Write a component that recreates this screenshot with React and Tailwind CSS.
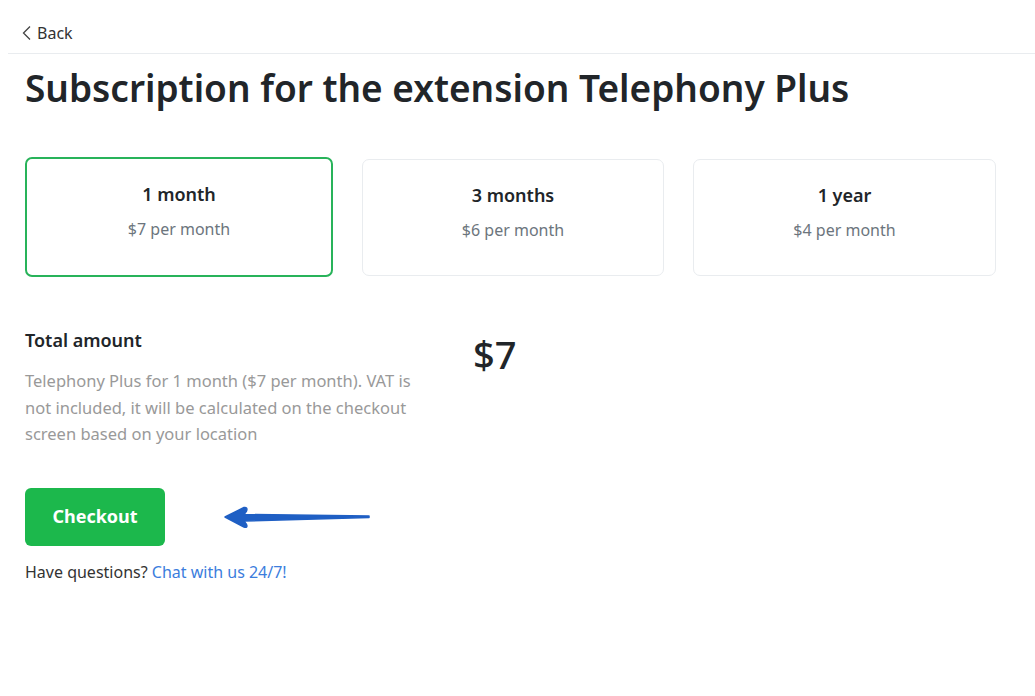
const plans = [
  { title: "1 month", price: "$7 per month", active: true },
  { title: "3 months", price: "$6 per month" },
  { title: "1 year", price: "$4 per month" },
];

function Arrow() {
  return (
    <svg width="150" height="30" viewBox="0 0 150 30" className="ml-[57px]">
      <path
        d="M3 15 L22 5.5 Q26 5 24.5 9 L22 12.5 L147 14 L147 15.5 L22 19 L24.5 22.5 Q26 26 22 25 Z"
        fill="#1f5fc4"
        stroke="#1f5fc4"
        strokeWidth="1.5"
        strokeLinejoin="round"
      />
    </svg>
  );
}

export default function App() {
  return (
    <div className="min-h-screen bg-white text-[#212529]" style={{ fontFamily: '"Noto Sans", "Open Sans", sans-serif' }}>
      <div className="pl-[8px]">
        <div className="h-[54px] flex items-center pl-[13px] pt-[13px] border-b border-[#e9ecef]">
          <button className="flex items-center gap-[4px] text-[16px] text-[#333]">
            <svg width="12" height="16" viewBox="0 0 12 16" fill="none">
              <path d="M9 1.5 L2.5 8 L9 14.5" stroke="#444" strokeWidth="1.3" />
            </svg>
            Back
          </button>
        </div>
      </div>

      <div className="px-[25px]">
        <h1 className="text-[37px] font-semibold leading-tight mt-[11px]">
          Subscription for the extension Telephony Plus
        </h1>

        <div className="grid grid-cols-[308px_302px_303px] gap-x-[29px] mt-[46px]">
          {plans.map((p) => (
            <div
              key={p.title}
              className={
                p.active
                  ? "h-[120px] rounded-[7px] border-2 border-[#28b35a] flex flex-col items-center pt-[22px]"
                  : "h-[117px] mt-[2px] rounded-[7px] border border-[#e9ecef] flex flex-col items-center pt-[22px]"
              }
            >
              <div className="text-[18px] font-semibold">{p.title}</div>
              <div className="text-[16px] text-[#6c757d] mt-[9px]">{p.price}</div>
            </div>
          ))}
        </div>

        <div className="flex mt-[50px]">
          <div className="w-[420px]">
            <div className="text-[18px] font-semibold">Total amount</div>
            <p className="text-[16.5px] leading-[26.5px] text-[#999] mt-[14px] w-[392px]">
              Telephony Plus for 1 month ($7 per month). VAT is not included, it will be calculated on the checkout screen based on your location
            </p>
          </div>
          <div className="text-[38px] font-medium ml-[28px] mt-[-1px]">$7</div>
        </div>

        <div className="flex items-center mt-[40px]">
          <button className="w-[140px] h-[58px] rounded-[6px] bg-[#1cb84c] text-white text-[18px] font-bold">
            Checkout
          </button>
          <Arrow />
        </div>

        <div className="text-[16px] mt-[14px] text-[#333]">
          Have questions? <a className="text-[#3b7ddd]">Chat with us 24/7!</a>
        </div>
      </div>
    </div>
  );
}
